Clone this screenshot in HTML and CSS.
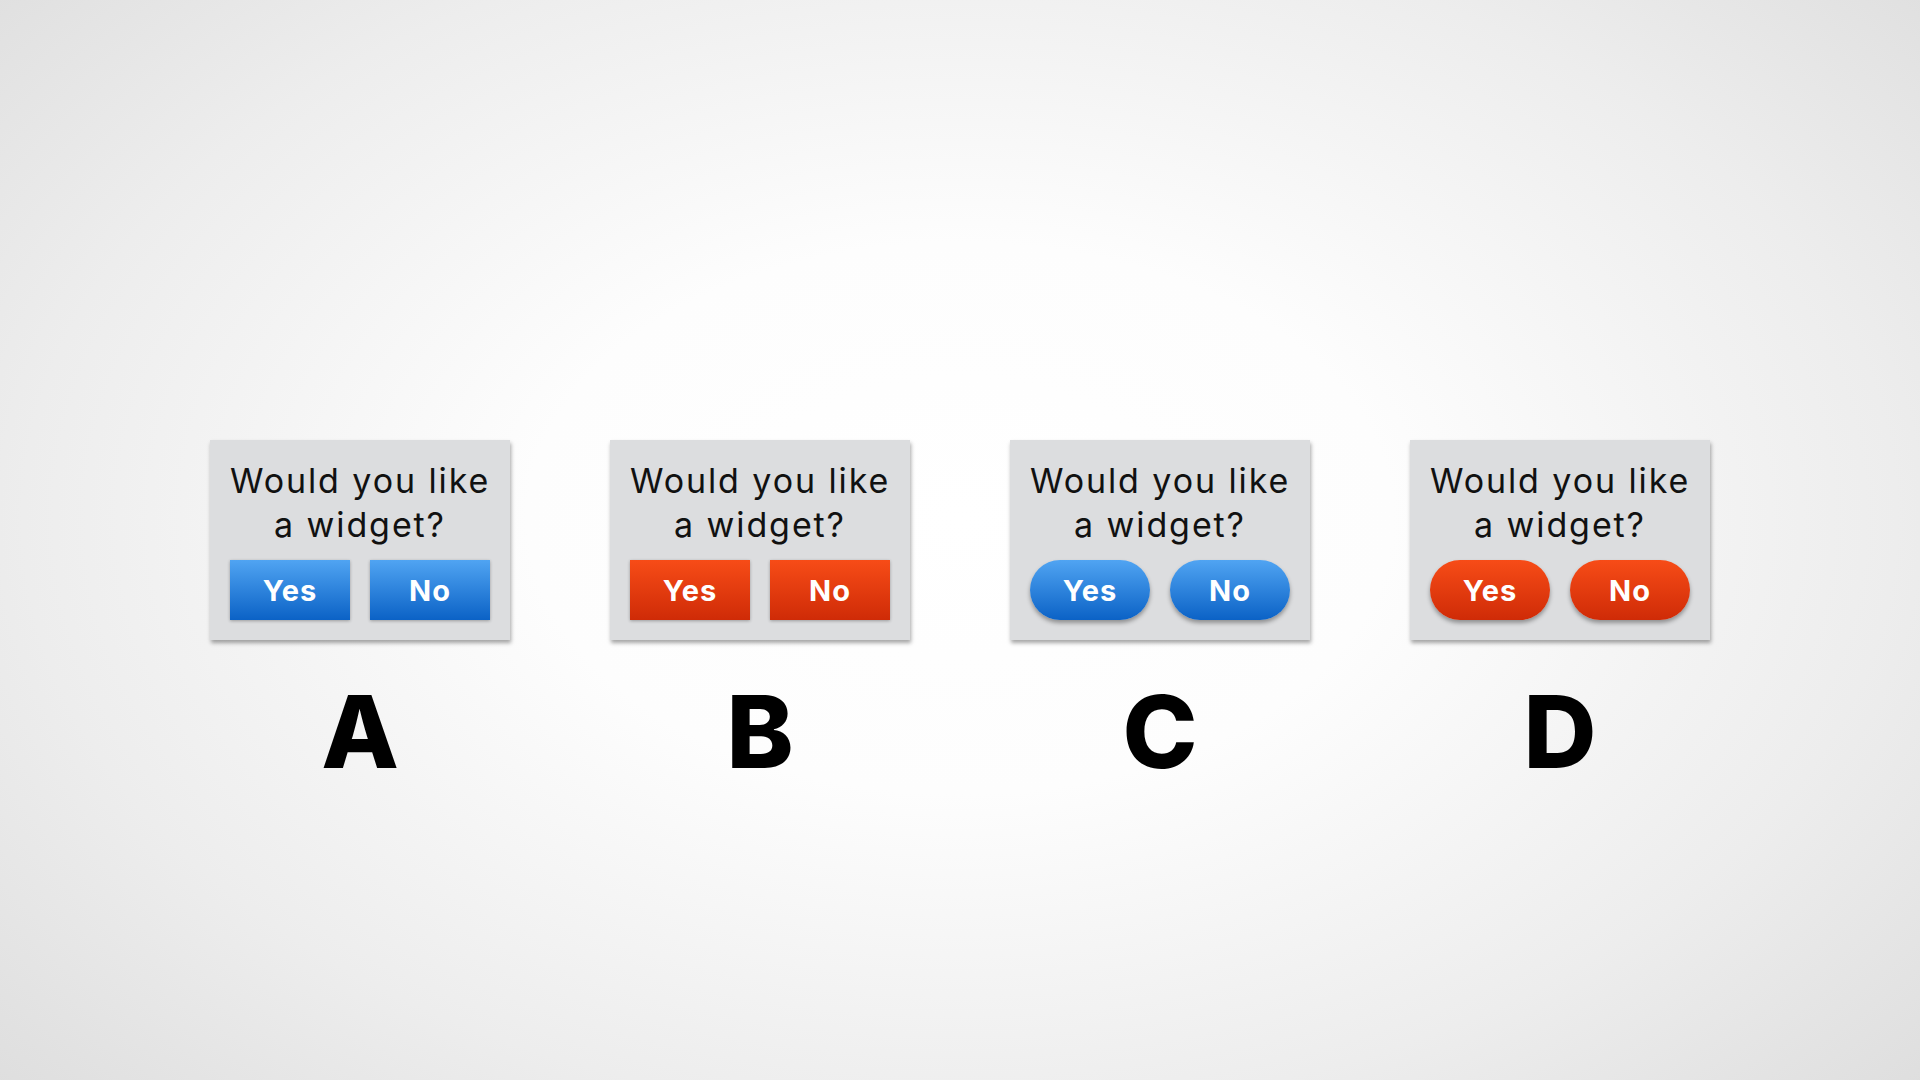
FILE: index.html
```html
<!DOCTYPE html>
<html lang="en">
<head>
  <meta charset="UTF-8" />
  <meta name="viewport" content="width=device-width, initial-scale=1.0"/>
  <title>Widget Dialogs</title>
  <link rel="stylesheet" href="styles.css">
</head>
<body>
  <div class="stage">
    <!-- A: square blue -->
    <div class="option">
      <div class="dialog">
        <p class="question">Would you like<br>a widget?</p>
        <div class="buttons">
          <button class="btn btn-blue">Yes</button>
          <button class="btn btn-blue">No</button>
        </div>
      </div>
      <div class="label">A</div>
    </div>

    <!-- B: square red -->
    <div class="option">
      <div class="dialog">
        <p class="question">Would you like<br>a widget?</p>
        <div class="buttons">
          <button class="btn btn-red">Yes</button>
          <button class="btn btn-red">No</button>
        </div>
      </div>
      <div class="label">B</div>
    </div>

    <!-- C: pill blue -->
    <div class="option">
      <div class="dialog">
        <p class="question">Would you like<br>a widget?</p>
        <div class="buttons">
          <button class="btn btn-pill btn-blue">Yes</button>
          <button class="btn btn-pill btn-blue">No</button>
        </div>
      </div>
      <div class="label">C</div>
    </div>

    <!-- D: pill red -->
    <div class="option">
      <div class="dialog">
        <p class="question">Would you like<br>a widget?</p>
        <div class="buttons">
          <button class="btn btn-pill btn-red">Yes</button>
          <button class="btn btn-pill btn-red">No</button>
        </div>
      </div>
      <div class="label">D</div>
    </div>
  </div>
</body>
</html>
```

FILE: styles.css
```css
html, body { height: 100%; }
body {
  margin: 0;
  font-family: Inter, "Open Sans", sans-serif;
  background: radial-gradient(ellipse 75% 85% at 50% 48%, #ffffff 0%, #fdfdfd 30%, #ededed 65%, #d9d9d9 100%);
  overflow: hidden;
}
.stage {
  display: flex;
  justify-content: center;
  gap: 100px;
  padding-top: 440px;
}
.option { width: 300px; display: flex; flex-direction: column; align-items: center; }
.dialog {
  width: 300px;
  height: 200px;
  box-sizing: border-box;
  padding: 19px 20px 20px;
  background: #dcdddf;
  box-shadow: 1px 3px 4px rgba(0,0,0,0.35);
  display: flex;
  flex-direction: column;
}
.question {
  margin: 0;
  text-align: center;
  font-size: 34px;
  line-height: 44px;
  font-weight: 400;
  color: #111;
  letter-spacing: 1.9px;
  white-space: nowrap;
}
.buttons { display: flex; gap: 20px; margin-top: auto; }
.btn {
  flex: 1;
  height: 60px;
  border: none;
  padding: 0;
  font-family: Inter, "Open Sans", sans-serif;
  font-size: 29px;
  font-weight: 700;
  color: #fff;
  letter-spacing: 1px;
  box-shadow: 0 1px 3px rgba(0,0,0,0.3);
}
.btn-blue { background: linear-gradient(#50a4f2, #0b62c6); }
.btn-red { background: linear-gradient(#f74c17, #cf2b07); }
.btn-pill { border-radius: 30px; box-shadow: 0 3px 4px rgba(0,0,0,0.35); }
.label {
  margin-top: 41px;
  font-size: 101px;
  font-weight: 800;
  line-height: 100px;
  color: #000;
}
```
